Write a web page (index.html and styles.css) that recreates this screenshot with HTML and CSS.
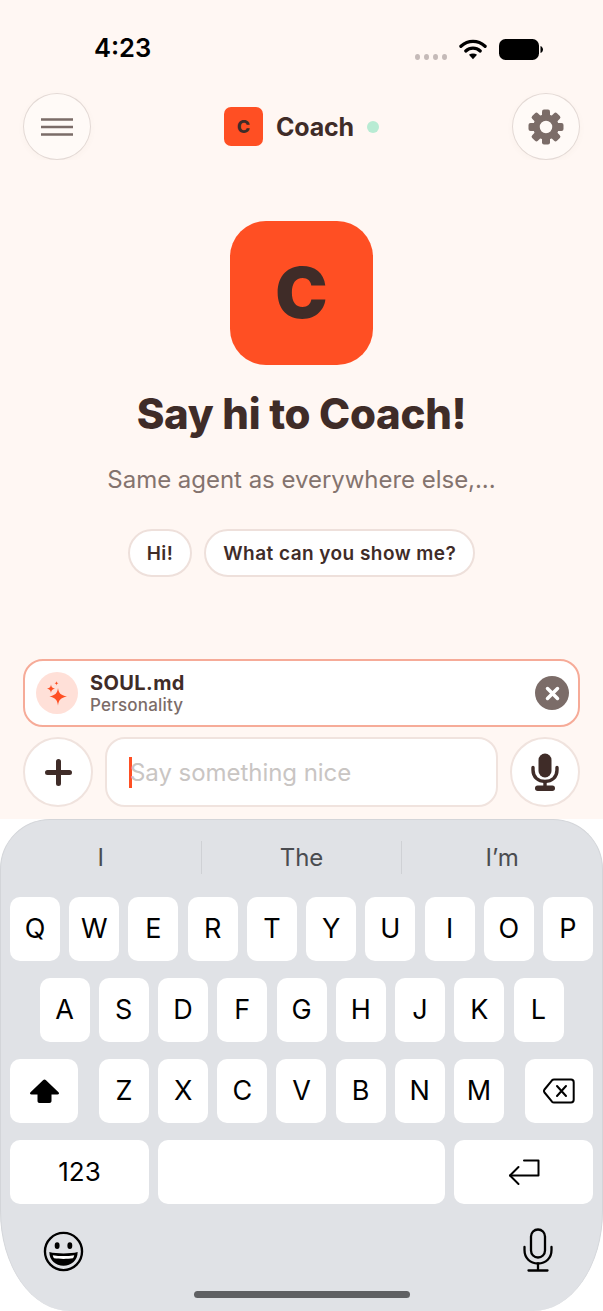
FILE: index.html
```html
<!DOCTYPE html>
<html lang="en">
<head>
<meta charset="utf-8">
<title>Coach</title>
<link rel="stylesheet" href="styles.css">
</head>
<body>
<div class="phone">
  <div class="status">
    <span class="time">4:23</span>
    <div class="status-icons">
      <div class="dots"><i></i><i></i><i></i><i></i></div>
      <svg class="wifi" width="28" height="22" viewBox="0 0 29 22"><path d="M2 8.2C9.500 1.500 19.500 1.500 27 8.200" fill="none" stroke="#000" stroke-width="3.400" stroke-linecap="round"/><path d="M7 13C11.500 9 17.500 9 22 13" fill="none" stroke="#000" stroke-width="3.400" stroke-linecap="round"/><path d="M14.500 21.500L10.300 17C12.800 15.200 16.200 15.200 18.700 17Z" fill="#000"/></svg>
      <svg class="battery" width="44" height="21" viewBox="0 0 44 21"><rect x="0" y="0" width="40" height="21" rx="6.500" fill="#000"/><path d="M41.500 7C43 7.500 44 9 44 10.500C44 12 43 13.500 41.500 14Z" fill="#000"/></svg>
    </div>
  </div>

  <header class="topbar">
    <button class="round-btn">
      <svg width="34" height="20" viewBox="0 0 34 20"><path d="M1 2.500H33M1 10H33M1 17.500H33" stroke="#7b6c68" stroke-width="2.500" fill="none"/></svg>
    </button>
    <div class="title">
      <div class="mini-logo">C</div>
      <span class="title-text">Coach</span>
      <span class="online"></span>
    </div>
    <button class="round-btn">
      <svg width="36" height="36" viewBox="0 0 36 36">
        <g fill="#7b6c68">
          <rect x="14" y="0.500" width="8" height="8" rx="2"/>
          <rect x="14" y="0.500" width="8" height="8" rx="2" transform="rotate(45 18 18)"/>
          <rect x="14" y="0.500" width="8" height="8" rx="2" transform="rotate(90 18 18)"/>
          <rect x="14" y="0.500" width="8" height="8" rx="2" transform="rotate(135 18 18)"/>
          <rect x="14" y="0.500" width="8" height="8" rx="2" transform="rotate(180 18 18)"/>
          <rect x="14" y="0.500" width="8" height="8" rx="2" transform="rotate(225 18 18)"/>
          <rect x="14" y="0.500" width="8" height="8" rx="2" transform="rotate(270 18 18)"/>
          <rect x="14" y="0.500" width="8" height="8" rx="2" transform="rotate(315 18 18)"/>
        </g>
        <circle cx="18" cy="18" r="9.500" fill="none" stroke="#7b6c68" stroke-width="6.500"/>
      </svg>
    </button>
  </header>

  <main class="hero">
    <div class="big-logo">C</div>
    <h1 class="hero-title">Say hi to Coach!</h1>
    <p class="hero-sub">Same agent as everywhere else,...</p>
    <div class="chips">
      <button class="chip">Hi!</button>
      <button class="chip">What can you show me?</button>
    </div>
  </main>

  <section class="composer">
    <div class="attach">
      <div class="attach-icon">
        <svg width="24" height="26" viewBox="0 0 24 26" fill="#ff4f23">
          <path d="M13 8C13.700 13 15.500 15.200 22 16.500C15.500 17.800 13.700 20 13 25.500C12.300 20 10.500 17.800 4.500 16.500C10.500 15.200 12.300 13 13 8Z"/>
          <path d="M6 4.500C6.300 7 7 8 10 8.700C7 9.400 6.300 10.400 6 13C5.700 10.400 5 9.400 2 8.700C5 8 5.700 7 6 4.500Z"/>
          <path d="M11.500 1C11.700 2.500 12.100 3 13.500 3.200C12.100 3.500 11.700 4 11.500 5.500C11.300 4 10.900 3.500 9.500 3.200C10.900 3 11.300 2.500 11.500 1Z"/>
        </svg>
      </div>
      <div class="attach-text">
        <span class="attach-name">SOUL.md</span>
        <span class="attach-kind">Personality</span>
      </div>
      <button class="attach-close">
        <svg width="15" height="15" viewBox="0 0 15 15"><path d="M2.500 2.500L12.500 12.500M12.500 2.500L2.500 12.500" stroke="#fff" stroke-width="3.500" stroke-linecap="round"/></svg>
      </button>
    </div>
    <div class="input-row">
      <button class="side-btn">
        <svg width="27" height="27" viewBox="0 0 27 27"><path d="M13.500 2.500V24.500M2.500 13.500H24.500" stroke="#3f2c28" stroke-width="5" stroke-linecap="round"/></svg>
      </button>
      <div class="input"><span class="caret"></span><span class="placeholder">Say something nice</span></div>
      <button class="side-btn">
        <svg width="28" height="38" viewBox="0 0 28 38">
          <rect x="7.500" y="0.500" width="13" height="24" rx="6.500" fill="#3f2c28"/>
          <path d="M2 14.500V17C2 24 7 28.500 14 28.500C21 28.500 26 24 26 17V14.500" fill="none" stroke="#3f2c28" stroke-width="3.400" stroke-linecap="round"/>
          <rect x="12.300" y="28" width="3.400" height="5" fill="#3f2c28"/>
          <rect x="4" y="32.500" width="20" height="5.500" rx="2.700" fill="#3f2c28"/>
        </svg>
      </button>
    </div>
  </section>

  <section class="keyboard-wrap">
    <div class="keyboard">
      <div class="suggestions">
        <span class="sugg">I</span>
        <span class="sugg">The</span>
        <span class="sugg">I’m</span>
      </div>
      <div class="keys">
        <div class="row">
          <span class="key">Q</span><span class="key">W</span><span class="key">E</span><span class="key">R</span><span class="key">T</span><span class="key">Y</span><span class="key">U</span><span class="key">I</span><span class="key">O</span><span class="key">P</span>
        </div>
        <div class="row row-inset">
          <span class="key">A</span><span class="key">S</span><span class="key">D</span><span class="key">F</span><span class="key">G</span><span class="key">H</span><span class="key">J</span><span class="key">K</span><span class="key">L</span>
        </div>
        <div class="row row-third">
          <span class="key key-mod">
            <svg width="31" height="26" viewBox="0 0 31 26"><path d="M15.500 1.500C16 1.500 16.500 1.700 17 2.200L29.500 14.200C30.500 15.200 30 16.500 28.500 16.500H22.500V23C22.500 24.200 21.700 25 20.500 25H10.500C9.300 25 8.500 24.200 8.500 23V16.500H2.500C1 16.500 .5 15.200 1.500 14.200L14 2.200C14.500 1.700 15 1.500 15.500 1.500Z" fill="#000"/></svg>
          </span>
          <div class="letters">
            <span class="key">Z</span><span class="key">X</span><span class="key">C</span><span class="key">V</span><span class="key">B</span><span class="key">N</span><span class="key">M</span>
          </div>
          <span class="key key-mod">
            <svg width="32" height="26" viewBox="0 0 32 26" fill="none" stroke="#000" stroke-width="2" stroke-linejoin="round" stroke-linecap="round"><path d="M11 1.500H28C29.700 1.500 30.700 2.500 30.700 4.200V21.800C30.700 23.500 29.700 24.500 28 24.500H11C10.200 24.500 9.500 24.200 9 23.700L1.500 14.500C.8 13.500 .8 12.500 1.500 11.500L9 2.300C9.500 1.800 10.200 1.500 11 1.500Z"/><path d="M14 8L23 18M23 8L14 18"/></svg>
          </span>
        </div>
        <div class="row row-bottom">
          <span class="key key-123">123</span>
          <span class="key key-space"></span>
          <span class="key key-return">
            <svg width="32" height="27" viewBox="0 0 32 27" fill="none" stroke="#000" stroke-width="2" stroke-linecap="round" stroke-linejoin="round"><path d="M16 1.500H30.500V16.500H2"/><path d="M10.500 8L2 16.500L10.500 25"/></svg>
          </span>
        </div>
      </div>
      <div class="kb-bottom">
        <svg class="emoji" width="41" height="41" viewBox="0 0 42 42">
          <circle cx="21" cy="21" r="19" fill="none" stroke="#000" stroke-width="2.400"/>
          <ellipse cx="14.500" cy="15" rx="2.500" ry="3.400" fill="#000"/>
          <ellipse cx="27.500" cy="15" rx="2.500" ry="3.400" fill="#000"/>
          <path d="M6.500 21.500C14 23.500 28 23.500 35.500 21.500C35.500 30 29 35.500 21 35.500C13 35.500 6.500 30 6.500 21.500Z" fill="#000"/>
          <path d="M10 24.800C17 26 25 26 32 24.800C31.600 26.500 31.200 27.300 30.600 28C25 28.900 17 28.900 11.400 28C10.800 27.300 10.400 26.500 10 24.800Z" fill="#fff"/>
        </svg>
        <svg width="30" height="44" viewBox="0 0 30 44" fill="none" stroke="#000" stroke-width="2.300" stroke-linecap="round">
          <rect x="8" y="1.500" width="14" height="28" rx="7"/>
          <path d="M1.500 19V22C1.500 30 7 35.500 15 35.500C23 35.500 28.500 30 28.500 22V19"/>
          <path d="M15 35.500V42M5.500 42.500H24.500"/>
        </svg>
      </div>
      <div class="home-bar"></div>
    </div>
  </section>
</div>
</body>
</html>
```

FILE: styles.css
```css
* { box-sizing: border-box; }
html, body { margin: 0; padding: 0; }
body { width: 603px; height: 1311px; overflow: hidden; background: #fff; font-family: Inter, "Liberation Sans", sans-serif; }
button { font-family: inherit; padding: 0; margin: 0; cursor: pointer; }

.phone { width: 603px; height: 1311px; display: flex; flex-direction: column; background: #fff; }

.status { height: 93px; padding: 35px 60px 0 94px; background: #fff7f3; display: flex; justify-content: space-between; align-items: flex-start; }
.time { font-size: 25.500px; line-height: 26px; font-weight: 600; color: #000; }
.status-icons { display: flex; align-items: center; gap: 12px; height: 26px; margin-top: 1px; }
.dots { display: flex; gap: 4px; margin-top: 16px; }
.dots i { width: 5px; height: 6px; border-radius: 50%; background: #c5bab8; display: block; }

.topbar { background: #fff7f3; height: 67px; padding: 0 23px; display: flex; justify-content: space-between; align-items: center; }
.round-btn { width: 68px; height: 67px; border-radius: 50%; border: 1px solid #e3d9d5; background: #fffaf7; display: flex; align-items: center; justify-content: center; box-shadow: 0 2px 6px rgba(120, 90, 80, .04); }
.title { display: flex; align-items: center; }
.mini-logo { width: 39px; height: 39px; border-radius: 7px; background: #ff4f23; color: #3f2c28; display: flex; align-items: center; justify-content: center; font-size: 18px; font-weight: 800; }
.title-text { font-size: 25px; font-weight: 700; color: #3f2c28; margin-left: 13px; letter-spacing: -.2px; }
.online { width: 12px; height: 12px; border-radius: 50%; background: #b8ebd3; margin-left: 13px; }

.hero { background: #fff7f3; flex: 1; display: flex; flex-direction: column; align-items: center; padding-top: 61px; }
.big-logo { width: 143px; height: 144px; border-radius: 36px; background: #ff4f23; color: #3f2c28; display: flex; align-items: center; justify-content: center; font-size: 70px; font-weight: 900; line-height: 1; }
.hero-title { margin: 24px 0 0; font-size: 42px; line-height: 50px; font-weight: 800; color: #3f2c28; letter-spacing: -.3px; }
.hero-sub { margin: 26px 0 0; font-size: 24px; line-height: 30px; font-weight: 400; color: #84736e; letter-spacing: -.03px; }
.chips { display: flex; gap: 12px; margin-top: 34px; }
.chip { height: 48px; padding: 0 17px; border: 2px solid #eee0db; border-radius: 24px; background: #fff; color: #3f2c28; font-size: 19px; font-weight: 600; letter-spacing: .45px; }

.composer { background: #fff7f3; padding: 0 23px 12px; display: flex; flex-direction: column; gap: 10px; }
.attach { height: 68px; border: 2px solid #f6ab98; border-radius: 20px; background: #fff; padding: 0 9px 0 11px; display: flex; align-items: center; }
.attach-icon { width: 42px; height: 42px; border-radius: 50%; background: #ffe0d8; display: flex; align-items: center; justify-content: center; }
.attach-text { display: flex; flex-direction: column; flex: 1; margin-left: 12px; }
.attach-name { font-size: 20px; line-height: 23px; font-weight: 700; color: #3f2c28; letter-spacing: .4px; }
.attach-kind { font-size: 17px; line-height: 20px; font-weight: 500; color: #7b6c68; letter-spacing: .2px; }
.attach-close { width: 34px; height: 34px; border: 0; border-radius: 50%; background: #7b6c68; display: flex; align-items: center; justify-content: center; }

.input-row { display: flex; gap: 12px; height: 70px; }
.side-btn { width: 70px; height: 70px; flex: none; border: 2px solid #f0e3de; border-radius: 50%; background: #fff; display: flex; align-items: center; justify-content: center; }
.input { flex: 1; border: 2px solid #f0e3de; border-radius: 20px; background: #fff; padding-left: 22px; display: flex; align-items: center; }
.caret { width: 3px; height: 31px; background: #ff4f23; flex: none; margin-right: -2px; }
.placeholder { font-size: 24px; color: #c9c5c3; letter-spacing: -.05px; }

.keyboard-wrap { height: 492px; background: #fff; }
.keyboard { height: 100%; background: #e0e2e6; border-radius: 50px 50px 70px 70px / 50px 50px 100px 100px; border: 1px solid #d3d5d9; border-bottom: 0; display: flex; flex-direction: column; position: relative; padding: 0 9px; }
.suggestions { height: 77px; margin: 0 -9px; padding-bottom: 3px; display: flex; align-items: center; flex: none; }
.sugg { flex: 1; height: 33px; display: flex; align-items: center; justify-content: center; font-size: 24px; color: #4a4c50; border-left: 1px solid #cfd1d5; }
.sugg:first-child { border-left: 0; }
.keys { display: flex; flex-direction: column; gap: 17px; }
.row { display: flex; justify-content: space-between; }
.row-inset { padding: 0 29.500px; }
.letters { display: flex; justify-content: space-between; width: 405px; }
.key { width: 50px; height: 64px; padding-bottom: 2px; border-radius: 10px; background: #fff; display: flex; align-items: center; justify-content: center; font-size: 27px; color: #000; }
.key-mod { width: 68px; padding-bottom: 0; }
.key-123 { width: 139px; font-size: 26px; }
.key-space { width: 287px; }
.key-return { width: 139px; padding-bottom: 0; }
.kb-bottom { display: flex; justify-content: space-between; align-items: center; padding: 0 40px 0 33px; margin-top: 24px; }
.emoji { margin-top: 3px; }
.home-bar { position: absolute; left: 193px; top: 471px; width: 216px; height: 7px; border-radius: 4px; background: #5f6063; }
```
